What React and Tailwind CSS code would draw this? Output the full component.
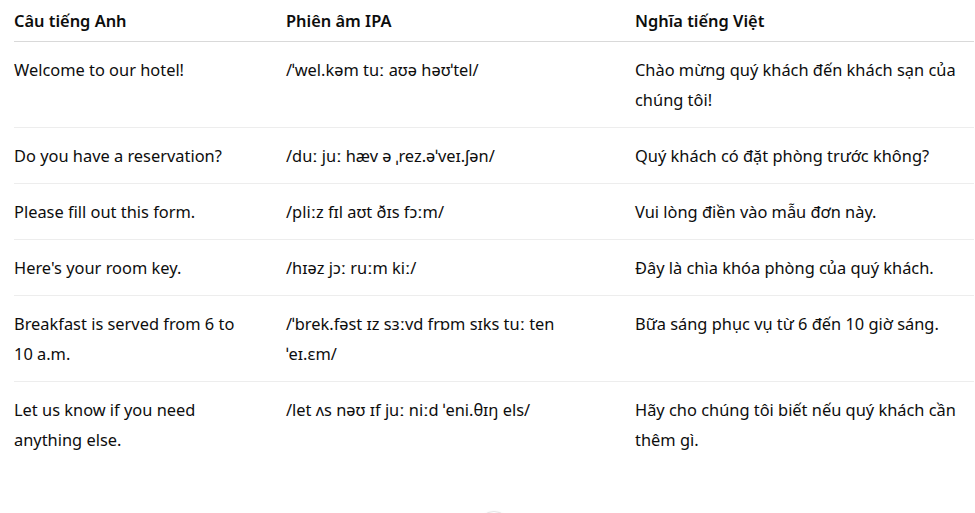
import React from "react";

const rows = [
  {
    en: ["Welcome to our hotel!"],
    ipa: ["/ˈwel.kəm tuː aʊə həʊˈtel/"],
    vi: ["Chào mừng quý khách đến khách sạn của", "chúng tôi!"],
  },
  {
    en: ["Do you have a reservation?"],
    ipa: ["/duː juː hæv ə ˌrez.əˈveɪ.ʃən/"],
    vi: ["Quý khách có đặt phòng trước không?"],
  },
  {
    en: ["Please fill out this form."],
    ipa: ["/pliːz fɪl aʊt ðɪs fɔːm/"],
    vi: ["Vui lòng điền vào mẫu đơn này."],
  },
  {
    en: ["Here's your room key."],
    ipa: ["/hɪəz jɔː ruːm kiː/"],
    vi: ["Đây là chìa khóa phòng của quý khách."],
  },
  {
    en: ["Breakfast is served from 6 to", "10 a.m."],
    ipa: ["/ˈbrek.fəst ɪz sɜːvd frɒm sɪks tuː ten", "ˈeɪ.ɛm/"],
    vi: ["Bữa sáng phục vụ từ 6 đến 10 giờ sáng."],
  },
  {
    en: ["Let us know if you need", "anything else."],
    ipa: ["/let ʌs nəʊ ɪf juː niːd ˈeni.θɪŋ els/"],
    vi: ["Hãy cho chúng tôi biết nếu quý khách cần", "thêm gì."],
  },
];

function Lines({ lines }) {
  return lines.map((l, i) => (
    <span key={i} className="block whitespace-nowrap">
      {l}
    </span>
  ));
}

export default function App() {
  return (
    <div
      className="relative h-[513px] w-[975px] overflow-hidden bg-white text-[#0d0d0d]"
      style={{ fontFamily: '"Noto Sans", "DejaVu Sans", sans-serif' }}
    >
      <div className="pl-[14px]">
        <table className="w-[960px] table-fixed border-collapse text-left text-[16.4px] leading-[30px]">
          <colgroup>
            <col className="w-[272px]" />
            <col className="w-[349px]" />
            <col className="w-[339px]" />
          </colgroup>
          <thead>
            <tr className="border-b border-[#d9d9d9]">
              <th className="pt-[6px] pb-[5px] font-semibold">Câu tiếng Anh</th>
              <th className="pt-[6px] pb-[5px] font-semibold">Phiên âm IPA</th>
              <th className="pt-[6px] pb-[5px] font-semibold">Nghĩa tiếng Việt</th>
            </tr>
          </thead>
          <tbody>
            {rows.map((r, i) => (
              <tr
                key={i}
                className={i < rows.length - 1 ? "border-b border-[#ededed]" : ""}
              >
                <td className="pt-[13px] pb-[12px] align-top">
                  <Lines lines={r.en} />
                </td>
                <td className="pt-[13px] pb-[12px] align-top">
                  <Lines lines={r.ipa} />
                </td>
                <td className="pt-[13px] pb-[12px] align-top">
                  <Lines lines={r.vi} />
                </td>
              </tr>
            ))}
          </tbody>
        </table>
      </div>
      <div className="absolute left-[478px] top-[511px] h-[32px] w-[32px] rounded-full border border-[#e5e5e5] bg-white shadow-sm" />
    </div>
  );
}
